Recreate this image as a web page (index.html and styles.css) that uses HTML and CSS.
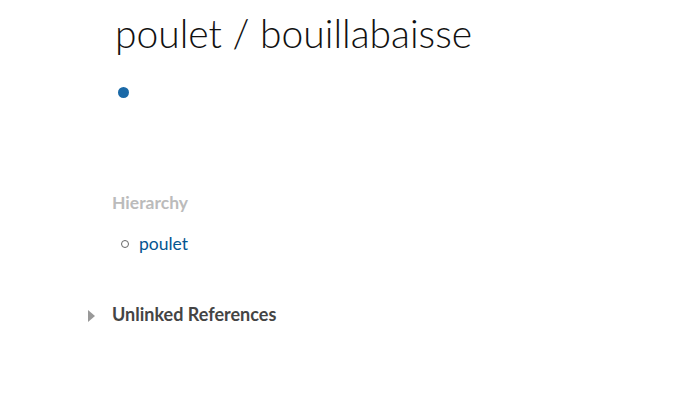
FILE: index.html
```html
<!DOCTYPE html>
<html>
<head>
<meta charset="utf-8">
<link rel="stylesheet" href="styles.css">
</head>
<body>
<main class="page">
  <h1 class="title">poulet / bouillabaisse</h1>
  <div class="block">
    <span class="dot"></span>
  </div>
  <section class="hierarchy">
    <h2 class="hier-title">Hierarchy</h2>
    <ul class="hier-list">
      <li><span class="ring"></span><a class="link">poulet</a></li>
    </ul>
  </section>
  <section class="unlinked">
    <span class="caret"></span>
    <h2 class="unlinked-title">Unlinked References</h2>
  </section>
</main>
</body>
</html>
```
FILE: styles.css
```css
* { box-sizing: border-box; }
html, body { margin: 0; padding: 0; background: #fff; }
body { font-family: Lato, "Noto Sans", sans-serif; color: #333; }
.page { padding: 7px 0 0 112px; width: 690px; height: 407px; }
.title {
  margin: 0 0 0 3px;
  font-weight: 300;
  font-size: 39px;
  line-height: 52px;
  color: #111;
}
.block { height: 40px; display: flex; align-items: center; padding-left: 6px; margin-top: 13px; }
.dot { width: 11px; height: 11px; border-radius: 50%; background: #1a69a7; display: block; }
.hierarchy { margin-top: 79px; }
.hier-title { margin: 0; font-size: 17.5px; font-weight: 700; color: #bbb; line-height: 24px; }
.hier-list { list-style: none; margin: 17px 0 0 0; padding: 0 0 0 9px; }
.hier-list li { display: flex; align-items: center; gap: 10px; font-size: 17.5px; line-height: 24px; }
.ring { width: 8px; height: 8px; border: 1px solid #666; border-radius: 50%; display: block; }
.link { color: #045591; }
.unlinked { display: flex; align-items: center; margin: 46px 0 0 -24px; }
.caret { width: 0; height: 0; border-left: 7px solid #999; border-top: 6px solid transparent; border-bottom: 6px solid transparent; margin-right: 17px; margin-top: 3px; }
.unlinked-title { margin: 0; font-size: 18px; font-weight: 700; color: #444; line-height: 24px; }
```
